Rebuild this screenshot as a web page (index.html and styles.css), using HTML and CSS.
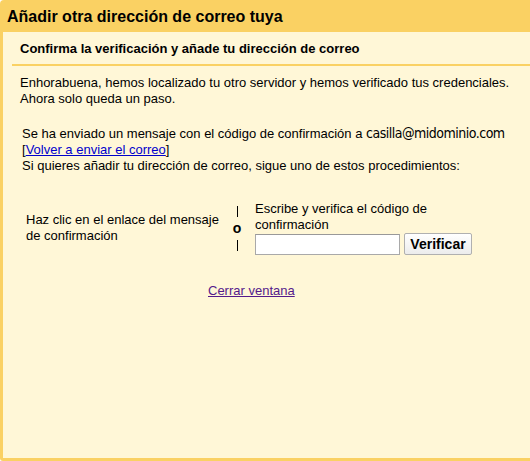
FILE: index.html
```
<html>
<head>
    <meta content="text/html;charset=utf-8" http-equiv="Content-Type"/>
    <link rel="stylesheet" href="styles.css">
</head>
<body>
<div class="frame">
    <div class="title">Añadir otra dirección de correo tuya</div>
    <div class="panel">
        <div class="subtitle">Confirma la verificación y añade tu dirección de correo</div>
        <p class="intro">Enhorabuena, hemos localizado tu otro servidor y hemos verificado tus credenciales. Ahora solo queda un paso.</p>
        <div class="sent">
            Se ha enviado un mensaje con el código de confirmación a <span class="address">casilla@midominio.com</span><br>
            [<a href="#" class="resend">Volver a enviar el correo</a>]<br>
            Si quieres añadir tu dirección de correo, sigue uno de estos procedimientos:
        </div>
        <div class="choice">
            <div class="option-link">Haz clic en el enlace del mensaje de confirmación</div>
            <div class="or">
                <span class="bar"></span>
                <span class="or-text">o</span>
                <span class="bar"></span>
            </div>
            <div class="option-code">
                <div>Escribe y verifica el código de confirmación</div>
                <div class="code-row">
                    <input type="text" class="code-input">
                    <button class="verify">Verificar</button>
                </div>
            </div>
        </div>
        <div class="close"><a href="#" class="close-link">Cerrar ventana</a></div>
    </div>
</div>
</body>
</html>
```

FILE: styles.css
```
html, body {
    margin: 0;
    height: 100%;
    overflow: hidden;
}
body {
    font-family: "Liberation Sans", Arial, sans-serif;
    font-size: 13px;
    line-height: 16px;
    color: #000;
    background: #fff;
}
.frame {
    box-sizing: border-box;
    width: 530px;
    height: 100%;
    background: #fad163;
    border-radius: 4px 0 0 3px;
    padding: 0 0 3px 3px;
    display: flex;
    flex-direction: column;
}
.title {
    font-size: 16px;
    font-weight: bold;
    line-height: 20px;
    height: 20px;
    padding: 7px 0 5px 4px;
}
.panel {
    flex: 1;
    background: #fff7d7;
    padding-left: 9px;
}
.subtitle {
    font-weight: bold;
    padding: 9px 0 7px 8px;
    border-bottom: 2px solid #fad163;
}
.intro {
    margin: 9px 0 0 0;
    padding-left: 8px;
    padding-right: 10px;
}
.sent {
    margin-top: 18px;
    padding-left: 10px;
}
.address {
    font-family: "DejaVu Sans Condensed", "DejaVu Sans", sans-serif;
    font-stretch: condensed;
    font-size: 14px;
    letter-spacing: -0.5px;
    color: #000;
}
a {
    color: #0000cc;
}
.choice {
    display: flex;
    align-items: center;
    margin-top: 27px;
    padding-left: 14px;
}
.option-link {
    width: 202px;
}
.or {
    width: 18px;
    display: flex;
    flex-direction: column;
    align-items: center;
    margin-right: 9px;
}
.bar {
    width: 1px;
    height: 11px;
    background: #000;
}
.or-text {
    font-weight: bold;
    font-size: 14px;
    line-height: 14px;
    margin: 4px 0 5px 0;
}
.option-code {
    width: 222px;
}
.code-row {
    display: flex;
    align-items: center;
    gap: 4px;
}
.code-input {
    box-sizing: border-box;
    width: 145px;
    height: 21px;
    margin: 0;
    border: 1px solid #a9a9a9;
    border-top-color: #999;
    background: #fff;
}
.verify {
    box-sizing: border-box;
    width: 68px;
    height: 22px;
    margin: 0;
    padding: 0;
    font-family: "Liberation Sans", Arial, sans-serif;
    font-size: 14px;
    font-weight: bold;
    color: #000;
    border: 1px solid #b0b0b0;
    border-radius: 2px;
    background: linear-gradient(#ffffff, #ececec);
}
.close {
    margin-top: 28px;
    padding-left: 196px;
}
.close-link {
    color: #551a8b;
}
```
